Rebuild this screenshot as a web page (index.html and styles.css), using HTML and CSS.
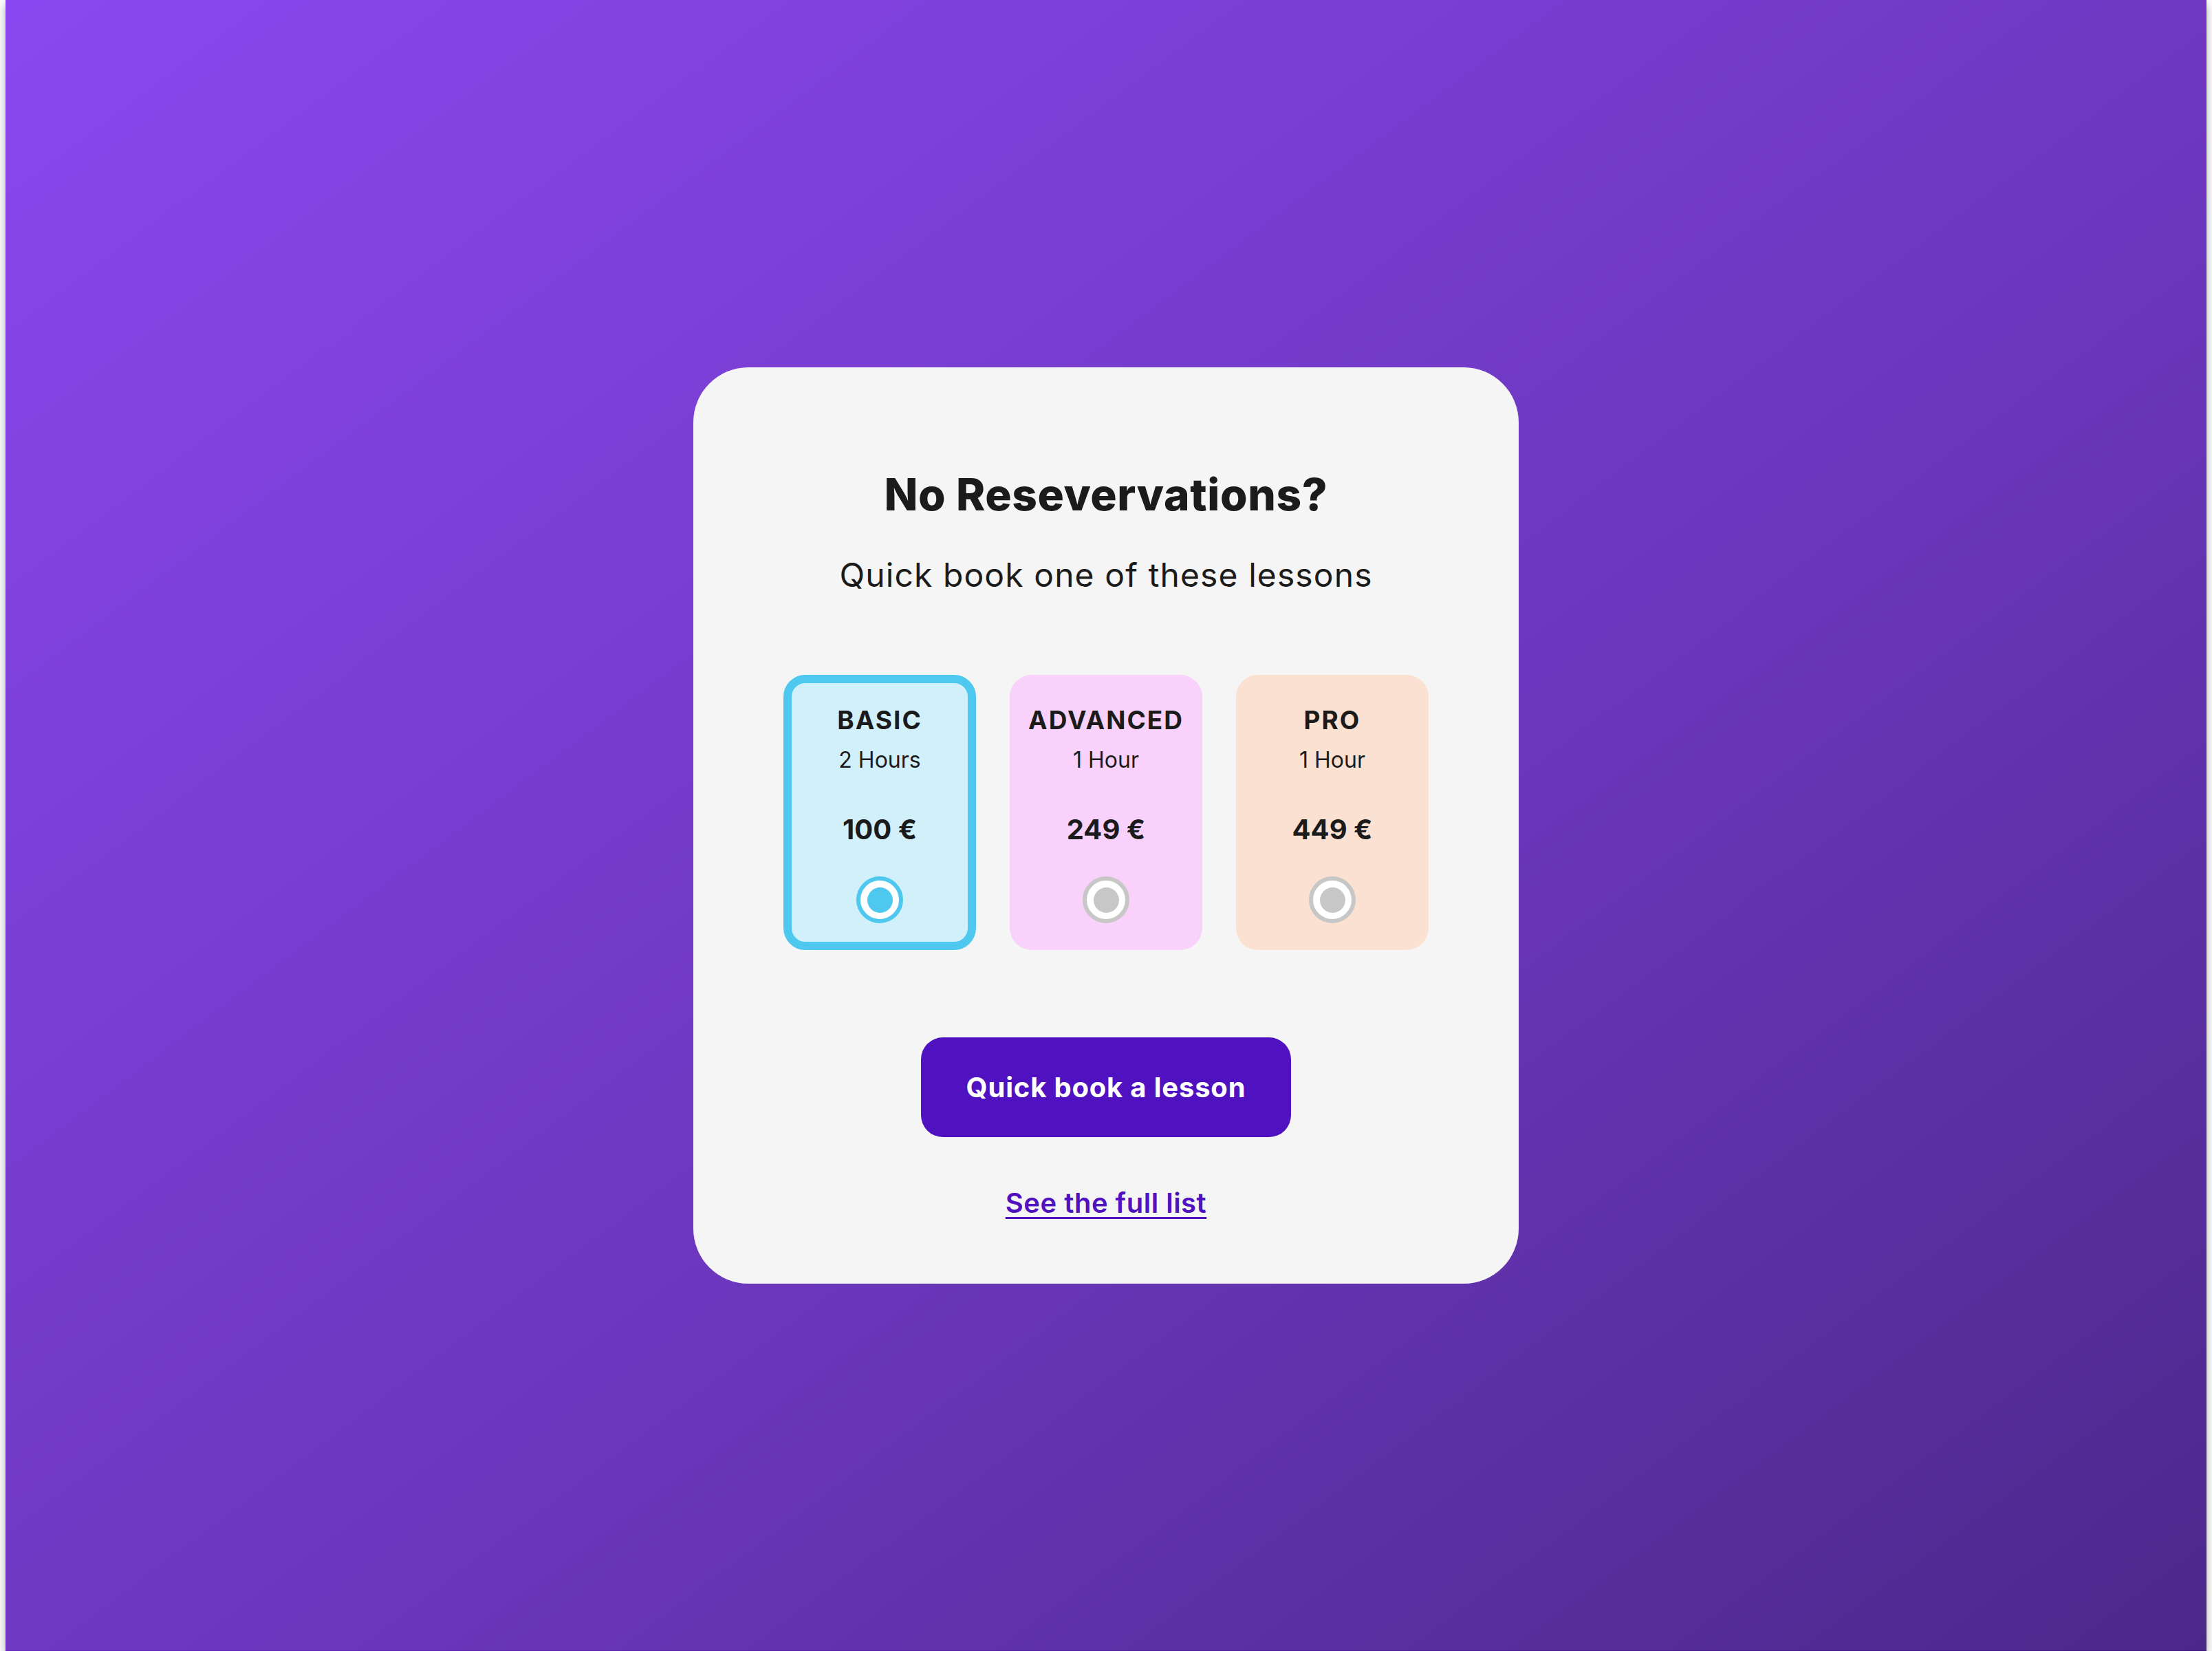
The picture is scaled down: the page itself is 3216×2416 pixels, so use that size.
FILE: index.html
```html
<!DOCTYPE html>
<html lang="en">
<head>
<meta charset="utf-8">
<title>Quick book</title>
<link rel="stylesheet" href="styles.css">
</head>
<body>
<main class="frame">
  <section class="panel">
    <h1 class="title">No Resevervations?</h1>
    <p class="subtitle">Quick book one of these lessons</p>
    <div class="plans">
      <label class="plan plan-basic is-selected">
        <span class="plan-name">BASIC</span>
        <span class="plan-duration">2 Hours</span>
        <span class="plan-price">100 €</span>
        <span class="radio"><span class="radio-dot"></span></span>
      </label>
      <label class="plan plan-advanced">
        <span class="plan-name">ADVANCED</span>
        <span class="plan-duration">1 Hour</span>
        <span class="plan-price">249 €</span>
        <span class="radio"><span class="radio-dot"></span></span>
      </label>
      <label class="plan plan-pro">
        <span class="plan-name">PRO</span>
        <span class="plan-duration">1 Hour</span>
        <span class="plan-price">449 €</span>
        <span class="radio"><span class="radio-dot"></span></span>
      </label>
    </div>
    <button class="cta" type="button">Quick book a lesson</button>
    <a class="full-list" href="#">See the full list</a>
  </section>
</main>
</body>
</html>
```
FILE: styles.css
```css
html, body {
  margin: 0;
  padding: 0;
  background: #ffffff;
}

body {
  font-family: "Inter", "Noto Sans", "DejaVu Sans", sans-serif;
  color: #1b1b1b;
}

.frame {
  margin-left: 8px;
  width: 3200px;
  height: 2400px;
  background: linear-gradient(to bottom right, #8b47ef 0%, #6c37be 55%, #4c288a 100%);
  box-shadow: 0 6px 14px rgba(0, 0, 0, 0.32);
  display: flex;
  align-items: center;
  justify-content: center;
}

.panel {
  box-sizing: border-box;
  width: 1200px;
  height: 1332px;
  background: #f5f5f5;
  border-radius: 80px;
  padding: 145px 0 0;
  display: flex;
  flex-direction: column;
  align-items: center;
}

.title {
  margin: 0;
  font-size: 64px;
  line-height: 80px;
  font-weight: 800;
  letter-spacing: 0.6px;
}

.subtitle {
  margin: 45px 0 0;
  font-size: 48px;
  line-height: 64px;
  font-weight: 400;
  letter-spacing: 1.1px;
}

.plans {
  margin-top: 113px;
  display: flex;
  gap: 49px;
}

.plan {
  box-sizing: border-box;
  width: 280px;
  height: 400px;
  border: 12px solid transparent;
  border-radius: 32px;
  padding-top: 32px;
  display: flex;
  flex-direction: column;
  align-items: center;
  cursor: pointer;
}

.plan-basic { background: #d2f0fa; }
.plan-advanced { background: #f9d2fb; }
.plan-pro { background: #fbe1d1; }

.plan.is-selected {
  border-color: #4fc8f0;
}

.plan-name {
  font-size: 37px;
  line-height: 44px;
  font-weight: 700;
  letter-spacing: 2px;
}

.plan-duration {
  margin-top: 16px;
  font-size: 32px;
  line-height: 40px;
  font-weight: 400;
}

.plan-price {
  margin-top: 57px;
  font-size: 40px;
  line-height: 48px;
  font-weight: 700;
}

.radio {
  box-sizing: border-box;
  margin-top: 44px;
  width: 68px;
  height: 68px;
  border-radius: 50%;
  border: 6px solid #c7c7c7;
  background: #ffffff;
  display: flex;
  align-items: center;
  justify-content: center;
}

.radio-dot {
  width: 37px;
  height: 37px;
  border-radius: 50%;
  background: #c7c7c7;
}

.is-selected .radio { border-color: #4fc8f0; }
.is-selected .radio-dot { background: #4fc8f0; }

.cta {
  margin-top: 127px;
  box-sizing: border-box;
  width: 538px;
  height: 145px;
  border: 0;
  border-radius: 32px;
  background: #5012c0;
  color: #ffffff;
  font-family: inherit;
  font-size: 40px;
  font-weight: 700;
  letter-spacing: 0.8px;
  cursor: pointer;
}

.full-list {
  margin-top: 72px;
  font-size: 40px;
  line-height: 48px;
  font-weight: 600;
  color: #5012c0;
  letter-spacing: 0.5px;
  text-decoration: underline;
  text-decoration-thickness: 3px;
  text-underline-offset: 6px;
}
```
